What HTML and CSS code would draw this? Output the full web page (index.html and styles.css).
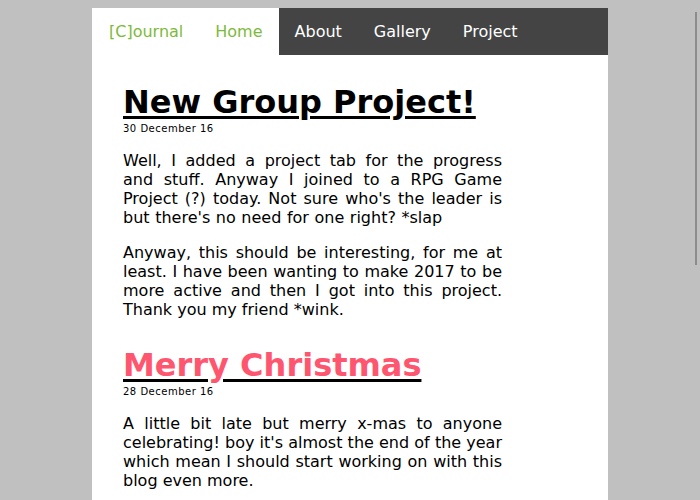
FILE: index.html
```html
<!DOCTYPE html>
<html>
<head>
<meta charset="utf-8">
<title>[C]ournal</title>
<link rel="stylesheet" href="styles.css">
</head>
<body>
<div class="page">
  <nav class="nav">
    <a class="nav-item logo" href="#">[C]ournal</a>
    <a class="nav-item active" href="#">Home</a>
    <div class="nav-dark">
      <a class="nav-item" href="#">About</a>
      <a class="nav-item" href="#">Gallery</a>
      <a class="nav-item" href="#">Project</a>
    </div>
  </nav>
  <main class="content">
    <article class="post">
      <h1 class="post-title"><span>New Group Project!</span></h1>
      <div class="post-date">30 December 16</div>
      <p class="wide">Well, I added a project tab for the progress and stuff. Anyway I joined to a RPG Game Project (?) today. Not sure who's the leader is but there's no need for one right? *slap</p>
      <p>Anyway, this should be interesting, for me at least. I have been wanting to make 2017 to be more active and then I got into this project. Thank you my friend *wink.</p>
    </article>
    <article class="post">
      <h1 class="post-title"><span class="pink">Merry Christmas</span></h1>
      <div class="post-date">28 December 16</div>
      <p>A little bit late but merry x-mas to anyone celebrating! boy it's almost the end of the year which mean I should start working on with this blog even more.</p>
      <p>Hope everyone had a great holiday and see you all in the new year. Stay warm and keep making things.</p>
    </article>
    <article class="post">
      <h1 class="post-title"><span>Hello World</span></h1>
      <div class="post-date">20 December 16</div>
      <p>So this is the first post of this little journal. I will write about the things I do, the things I draw and the projects I join here from now on.</p>
      <p>Not much to see yet, but stay tuned!</p>
    </article>
  </main>
</div>
<div class="scroll-thumb"></div>
</body>
</html>
```

FILE: styles.css
```css
html {
  background: #c0c0c0;
}
body {
  margin: 8px 0 0 0;
  font-family: Verdana, "DejaVu Sans", sans-serif;
  color: #000;
}
.page {
  width: 516px;
  margin: 0 auto;
  background: #fff;
}
.nav {
  display: flex;
  height: 47px;
}
.nav-item {
  display: block;
  padding: 0 16px;
  line-height: 47px;
  font-size: 16px;
  text-decoration: none;
  color: #fff;
}
.logo {
  padding-left: 17px;
}
.logo,
.active {
  color: #7dba3c;
}
.nav-dark {
  flex: 1;
  display: flex;
  background: #444444;
}
.content {
  padding: 28px 106px 20px 31px;
}
.post {
  margin-bottom: 27px;
}
.post-title {
  margin: 0;
  font-size: 32px;
  line-height: 38px;
  font-weight: bold;
  text-decoration: underline;
  text-decoration-thickness: 3px;
  text-underline-offset: 3px;
  color: #000;
}
.pink {
  color: #ff5670;
}
.post-date {
  font-size: 10px;
  line-height: 13px;
  margin-top: 1px;
  letter-spacing: 0.5px;
}
.post p {
  margin: 16px 0;
  font-size: 16px;
  line-height: 19px;
  text-align: justify;
}
.post p.wide {
  word-spacing: 0.5px;
}
.scroll-thumb {
  position: fixed;
  top: 12px;
  right: 3px;
  width: 2px;
  height: 253px;
  background: #8c8c8c;
}
```
